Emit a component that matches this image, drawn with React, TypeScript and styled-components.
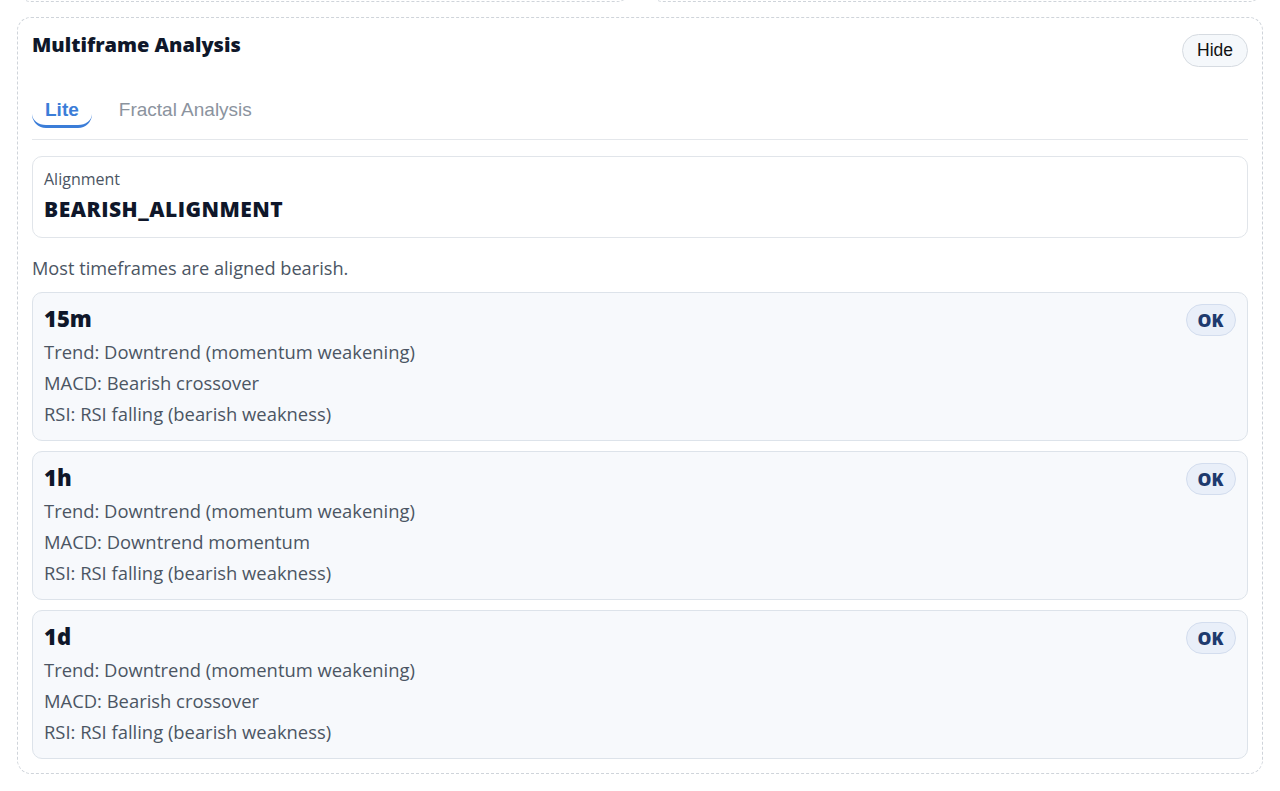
import React from "react";
import styled, { createGlobalStyle } from "styled-components";

const Global = createGlobalStyle`
  html, body { margin: 0; padding: 0; background: #ffffff; overflow: hidden; }
  body { font-family: "Open Sans", "Noto Sans", sans-serif; color: #111827; }
  * { box-sizing: border-box; }
`;

const Viewport = styled.div`
  width: 1280px;
  height: 791px;
  overflow: hidden;
`;

const Page = styled.div`
  padding: 0 17px;
  display: flex;
  flex-direction: column;
  gap: 15px;
  margin-top: -60px;
`;

const TopRow = styled.div`
  flex-shrink: 0;
  display: grid;
  grid-template-columns: 1fr 1fr;
  gap: 18px;
  height: 62px;
`;

const Card = styled.section`
  border: 1.5px dashed #cfd4da;
  border-radius: 14px;
  background: #ffffff;
`;

const MainCard = styled(Card)`
  flex-shrink: 0;
  padding: 14px 14px 14px 14px;
  display: flex;
  flex-direction: column;
`;

const Header = styled.div`
  display: flex;
  justify-content: space-between;
  align-items: flex-start;
`;

const Title = styled.h2`
  margin: 0;
  font-family: "Open Sans", sans-serif;
  font-weight: 800;
  font-size: 20px;
  line-height: 26px;
  color: #0f172a;
`;

const HideButton = styled.button`
  margin-top: 2px;
  height: 33px;
  padding: 0 14px;
  border-radius: 17px;
  border: 1.5px solid #d6dbe1;
  background: #f5f8fb;
  font-family: "Liberation Sans", Arial, sans-serif;
  font-size: 17.5px;
  color: #111;
`;

const Tabs = styled.div`
  display: flex;
  align-items: flex-end;
  gap: 27px;
  margin-top: 31.5px;
  border-bottom: 1.5px solid #e4e7eb;
  padding-bottom: 11px;
`;

const Tab = styled.div<{ $active?: boolean }>`
  font-family: "Liberation Sans", Arial, sans-serif;
  font-size: 19px;
  font-weight: ${(p) => (p.$active ? 700 : 400)};
  color: ${(p) => (p.$active ? "#3b7dd8" : "#8b939e")};
  padding: 0 ${(p) => (p.$active ? "13px" : "0")} 4px;
  line-height: 22px;
  border-bottom: 3px solid ${(p) => (p.$active ? "#3b7dd8" : "transparent")};
  border-radius: 0 0 14px 14px;
`;

const AlignBox = styled.div`
  margin-top: 16.5px;
  border: 1.5px solid #e1e5ea;
  border-radius: 10px;
  padding: 12px 11px 13.5px;
  display: flex;
  flex-direction: column;
  gap: 6px;
`;

const Label = styled.div`
  font-size: 16px;
  line-height: 20px;
  color: #4b5563;
`;

const AlignValue = styled.div`
  font-size: 21px;
  line-height: 28px;
  font-weight: 800;
  letter-spacing: 0.5px;
  color: #0f172a;
`;

const Summary = styled.div`
  margin-top: 19px;
  font-size: 18.2px;
  line-height: 22px;
  color: #4b5563;
`;

const FrameList = styled.div`
  margin-top: 13px;
  display: flex;
  flex-direction: column;
  gap: 10px;
`;

const FrameCard = styled.div`
  height: 149px;
  border: 1.5px solid #dde3ea;
  border-radius: 10px;
  background: #f7f9fc;
  padding: 11px 10.5px 10px 11px;
  display: flex;
  justify-content: space-between;
  align-items: flex-start;
`;

const FrameBody = styled.div`
  display: flex;
  flex-direction: column;
`;

const FrameTitle = styled.div`
  font-size: 22px;
  line-height: 28px;
  font-weight: 800;
  color: #0f172a;
  margin-bottom: 4.5px;
`;

const FrameLine = styled.div`
  font-size: 18.4px;
  line-height: 31px;
  color: #4b5563;
`;

const Badge = styled.span`
  margin-right: 1px;
  height: 32px;
  padding: 0 11px;
  border-radius: 16px;
  background: #e9eff9;
  border: 1.5px solid #d3ddee;
  color: #1e3a6e;
  font-weight: 800;
  font-size: 17.5px;
  display: inline-flex;
  align-items: center;
`;

const frames = [
  {
    tf: "15m",
    lines: [
      "Trend: Downtrend (momentum weakening)",
      "MACD: Bearish crossover",
      "RSI: RSI falling (bearish weakness)",
    ],
  },
  {
    tf: "1h",
    lines: [
      "Trend: Downtrend (momentum weakening)",
      "MACD: Downtrend momentum",
      "RSI: RSI falling (bearish weakness)",
    ],
  },
  {
    tf: "1d",
    lines: [
      "Trend: Downtrend (momentum weakening)",
      "MACD: Bearish crossover",
      "RSI: RSI falling (bearish weakness)",
    ],
  },
];

export default function App() {
  return (
    <>
      <Global />
      <Viewport>
        <Page>
          <TopRow>
            <Card />
            <Card />
          </TopRow>
          <MainCard>
            <Header>
              <Title>Multiframe Analysis</Title>
              <HideButton>Hide</HideButton>
            </Header>
            <Tabs>
              <Tab $active>Lite</Tab>
              <Tab>Fractal Analysis</Tab>
            </Tabs>
            <AlignBox>
              <Label>Alignment</Label>
              <AlignValue>BEARISH_ALIGNMENT</AlignValue>
            </AlignBox>
            <Summary>Most timeframes are aligned bearish.</Summary>
            <FrameList>
              {frames.map((f) => (
                <FrameCard key={f.tf}>
                  <FrameBody>
                    <FrameTitle>{f.tf}</FrameTitle>
                    {f.lines.map((l) => (
                      <FrameLine key={l}>{l}</FrameLine>
                    ))}
                  </FrameBody>
                  <Badge>OK</Badge>
                </FrameCard>
              ))}
            </FrameList>
          </MainCard>
        </Page>
      </Viewport>
    </>
  );
}
